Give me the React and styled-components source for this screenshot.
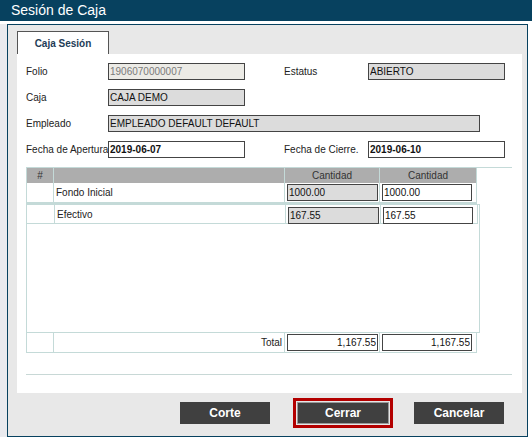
import styled, { createGlobalStyle } from 'styled-components';

const GlobalStyle = createGlobalStyle`
  html, body {
    margin: 0;
    padding: 0;
    background: #fff;
    font-family: "Liberation Sans", Arial, sans-serif;
  }
  * { box-sizing: border-box; }
`;

const teal = '#c4dad8';

const Window = styled.div`
  width: 532px;
  height: 438px;
  background: #fff;
  display: flex;
  flex-direction: column;
`;

const TitleBar = styled.div`
  height: 21px;
  background: #07415f;
  color: #fff;
  font-size: 14px;
  line-height: 21px;
  padding-left: 11px;
`;

const Body = styled.div`
  display: flex;
  margin-top: 3px;
`;

const Gutter = styled.div`
  width: 7px;
  background: #e9eaee;
`;

const Panel = styled.div`
  width: 521px;
  border: 1px solid #07415f;
  background: #e8e8e8;
  padding: 6px 5px 0 9px;
`;

const Tabs = styled.div`
  display: flex;
`;

const Tab = styled.div`
  width: 92px;
  height: 23px;
  background: #fff;
  border: 1px solid #555;
  border-bottom: none;
  color: #1e3c57;
  font-size: 10px;
  font-weight: bold;
  display: flex;
  align-items: center;
  justify-content: center;
  padding-top: 1px;
`;

const Content = styled.div`
  background: #fff;
  height: 339px;
  padding: 9px 0 17px 9px;
`;

const Form = styled.div`
  display: grid;
  grid-template-columns: 82px 137px 39px 84px 137px;
  grid-auto-rows: 17px;
  row-gap: 9px;
  align-items: center;
`;

const Label = styled.label`
  font-size: 10px;
  color: #222;
  white-space: nowrap;
  grid-column: ${p => p.$col || 'auto'};
`;

const Field = styled.input`
  height: 17px;
  width: ${p => p.$w || '100%'};
  border: 1px solid #444;
  padding: 0 1px;
  margin: 0;
  font-family: inherit;
  font-size: 10px;
  font-weight: ${p => (p.$bold ? 'bold' : 'normal')};
  color: ${p => p.$muted ? '#7a7a7a' : '#111'};
  background: ${p => p.$bg || '#dcdcdc'};
  text-align: ${p => p.$align || 'left'};
  outline: none;
  grid-column: ${p => p.$col || 'auto'};
`;

const TableWrap = styled.div`
  margin-top: 9px;
  width: 486px;
  border-top: 1px solid ${teal};
`;

const cols = '28px 231px 95px 97px';

const HeadRow = styled.div`
  display: grid;
  grid-template-columns: ${cols};
  width: 451px;
`;

const HeadCell = styled.div`
  height: 15px;
  background: #adadad;
  border-right: 1px solid ${teal};
  border-left: ${p => (p.$first ? `1px solid ${teal}` : 'none')};
  font-size: 10px;
  color: #333;
  text-align: center;
  line-height: 15px;
`;

const Row = styled.div`
  display: grid;
  grid-template-columns: ${cols};
  width: 451px;
  height: ${p => p.$h || 21}px;
  border-bottom: ${p => p.$bb || 1}px solid ${teal};
`;

const Cell = styled.div`
  border-right: 1px solid ${teal};
  border-left: ${p => (p.$first ? `1px solid ${teal}` : 'none')};
  font-size: 10px;
  color: #222;
  display: flex;
  align-items: ${p => p.$top ? 'flex-start' : 'center'};
  justify-content: ${p => (p.$right ? 'flex-end' : 'flex-start')};
  padding: ${p => p.$pad || '0 2px'};
`;

const Scroller = styled.div`
  width: 454px;
  height: 129px;
  border: 1px solid ${teal};
`;

const TotalRow = styled(Row)`
  border-top: 1px solid ${teal};
  margin-top: -1px;
`;

const Separator = styled.div`
  margin-top: 21px;
  width: 486px;
  border-top: 1px solid #c8d8d6;
`;

const Footer = styled.div`
  height: 43px;
  display: flex;
  justify-content: flex-end;
  align-items: flex-start;
  padding: 9px 18px 0 0;
`;

const Button = styled.button`
  width: ${p => p.$w || 90}px;
  height: 22px;
  margin-left: ${p => p.$ml || 0}px;
  background: #404040;
  color: #fff;
  font-family: inherit;
  font-size: 12px;
  font-weight: bold;
  border: ${p => (p.$focus ? '1px solid #9a9a9a' : 'none')};
  outline: ${p => (p.$focus ? '3px solid #b30000' : 'none')};
  outline-offset: 1px;
  padding: 0;
`;

const App = () => {
  return (
    <Window>
      <GlobalStyle />
      <TitleBar>Sesión de Caja</TitleBar>
      <Body>
        <Gutter />
        <Panel>
          <Tabs>
            <Tab>Caja Sesión</Tab>
          </Tabs>
          <Content>
            <Form>
              <Label>Folio</Label>
              <Field readOnly value="1906070000007" $bg="#ecebe6" $muted />
              <Label $col="4">Estatus</Label>
              <Field readOnly value="ABIERTO" />

              <Label>Caja</Label>
              <Field readOnly value="CAJA DEMO" />
              <span style={{ gridColumn: '3 / 6' }} />

              <Label>Empleado</Label>
              <Field readOnly value="EMPLEADO DEFAULT DEFAULT" $col="2 / 6" $w="372px" />

              <Label>Fecha de Apertura</Label>
              <Field readOnly value="2019-06-07" $bg="#fff" $bold />
              <Label $col="4">Fecha de Cierre.</Label>
              <Field readOnly value="2019-06-10" $bg="#fff" $bold />
            </Form>

            <TableWrap>
              <HeadRow>
                <HeadCell $first>#</HeadCell>
                <HeadCell />
                <HeadCell>Cantidad</HeadCell>
                <HeadCell>Cantidad</HeadCell>
              </HeadRow>
              <Row $h={21} $bb={2}>
                <Cell $first />
                <Cell>Fondo Inicial</Cell>
                <Cell $top $pad="1px 2px 0 2px">
                  <Field readOnly value="1000.00" $w="91px" />
                </Cell>
                <Cell $top $pad="1px 2px 0 2px">
                  <Field readOnly value="1000.00" $bg="#fff" $w="90px" />
                </Cell>
              </Row>
              <Scroller>
                <Row $h={19}>
                  <Cell />
                  <Cell>Efectivo</Cell>
                  <Cell $top $pad="2px 2px 0 2px">
                    <Field readOnly value="167.55" $w="91px" />
                  </Cell>
                  <Cell $top $pad="2px 2px 0 2px">
                    <Field readOnly value="167.55" $bg="#fff" $w="90px" />
                  </Cell>
                </Row>
              </Scroller>
              <TotalRow $h={21}>
                <Cell $first />
                <Cell $right>Total</Cell>
                <Cell $top $pad="1px 2px 0 2px">
                  <Field readOnly value="1,167.55" $bg="#fff" $align="right" $w="91px" />
                </Cell>
                <Cell $top $pad="1px 2px 0 2px">
                  <Field readOnly value="1,167.55" $bg="#fff" $align="right" $w="90px" />
                </Cell>
              </TotalRow>
              <Separator />
            </TableWrap>
          </Content>
          <Footer>
            <Button>Corte</Button>
            <Button $ml={27} $w={92} $focus>Cerrar</Button>
            <Button $ml={25}>Cancelar</Button>
          </Footer>
        </Panel>
      </Body>
    </Window>
  );
};

export default App;
